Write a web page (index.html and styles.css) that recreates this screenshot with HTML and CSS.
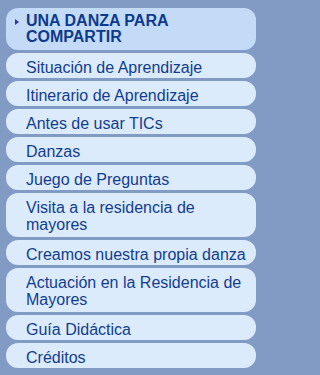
FILE: index.html
```html
<!DOCTYPE html>
<html lang="es">
<head>
<meta charset="utf-8">
<title>Una danza para compartir</title>
<link rel="stylesheet" href="styles.css">
</head>
<body>
<nav class="menu">
  <a class="item active" href="#">UNA DANZA PARA COMPARTIR</a>
  <a class="item" href="#">Situación de Aprendizaje</a>
  <a class="item" href="#">Itinerario de Aprendizaje</a>
  <a class="item" href="#">Antes de usar TICs</a>
  <a class="item" href="#">Danzas</a>
  <a class="item" href="#">Juego de Preguntas</a>
  <a class="item tall" href="#">Visita a la residencia de mayores</a>
  <a class="item" href="#">Creamos nuestra propia danza</a>
  <a class="item tall" href="#">Actuación en la Residencia de Mayores</a>
  <a class="item" href="#">Guía Didáctica</a>
  <a class="item" href="#">Créditos</a>
</nav>
</body>
</html>
```
FILE: styles.css
```css
html, body {
  margin: 0;
  background: #829bc5;
}
body {
  padding: 8px 9px 8px 6px;
  font-family: "Liberation Sans", Arial, Helvetica, sans-serif;
}
.menu {
  display: flex;
  flex-direction: column;
  gap: 3px;
  width: 250px;
}
.item {
  display: block;
  position: relative;
  background: #dcebfb;
  color: #123d8e;
  text-decoration: none;
  font-size: 16px;
  line-height: 17px;
  padding: 6px 6px 2px 20px;
  border-radius: 12px;
}
.item.tall {
  padding-bottom: 4px;
}
.item.active {
  background: #c3dbf7;
  font-weight: bold;
  line-height: 16px;
  padding-top: 5px;
  padding-bottom: 5px;
  color: #0f3a8c;
}
.item.active::before {
  content: "";
  position: absolute;
  left: 9px;
  top: 11px;
  width: 0;
  height: 0;
  border-left: 4px solid #33359f;
  border-top: 3.5px solid transparent;
  border-bottom: 3.5px solid transparent;
}
```
